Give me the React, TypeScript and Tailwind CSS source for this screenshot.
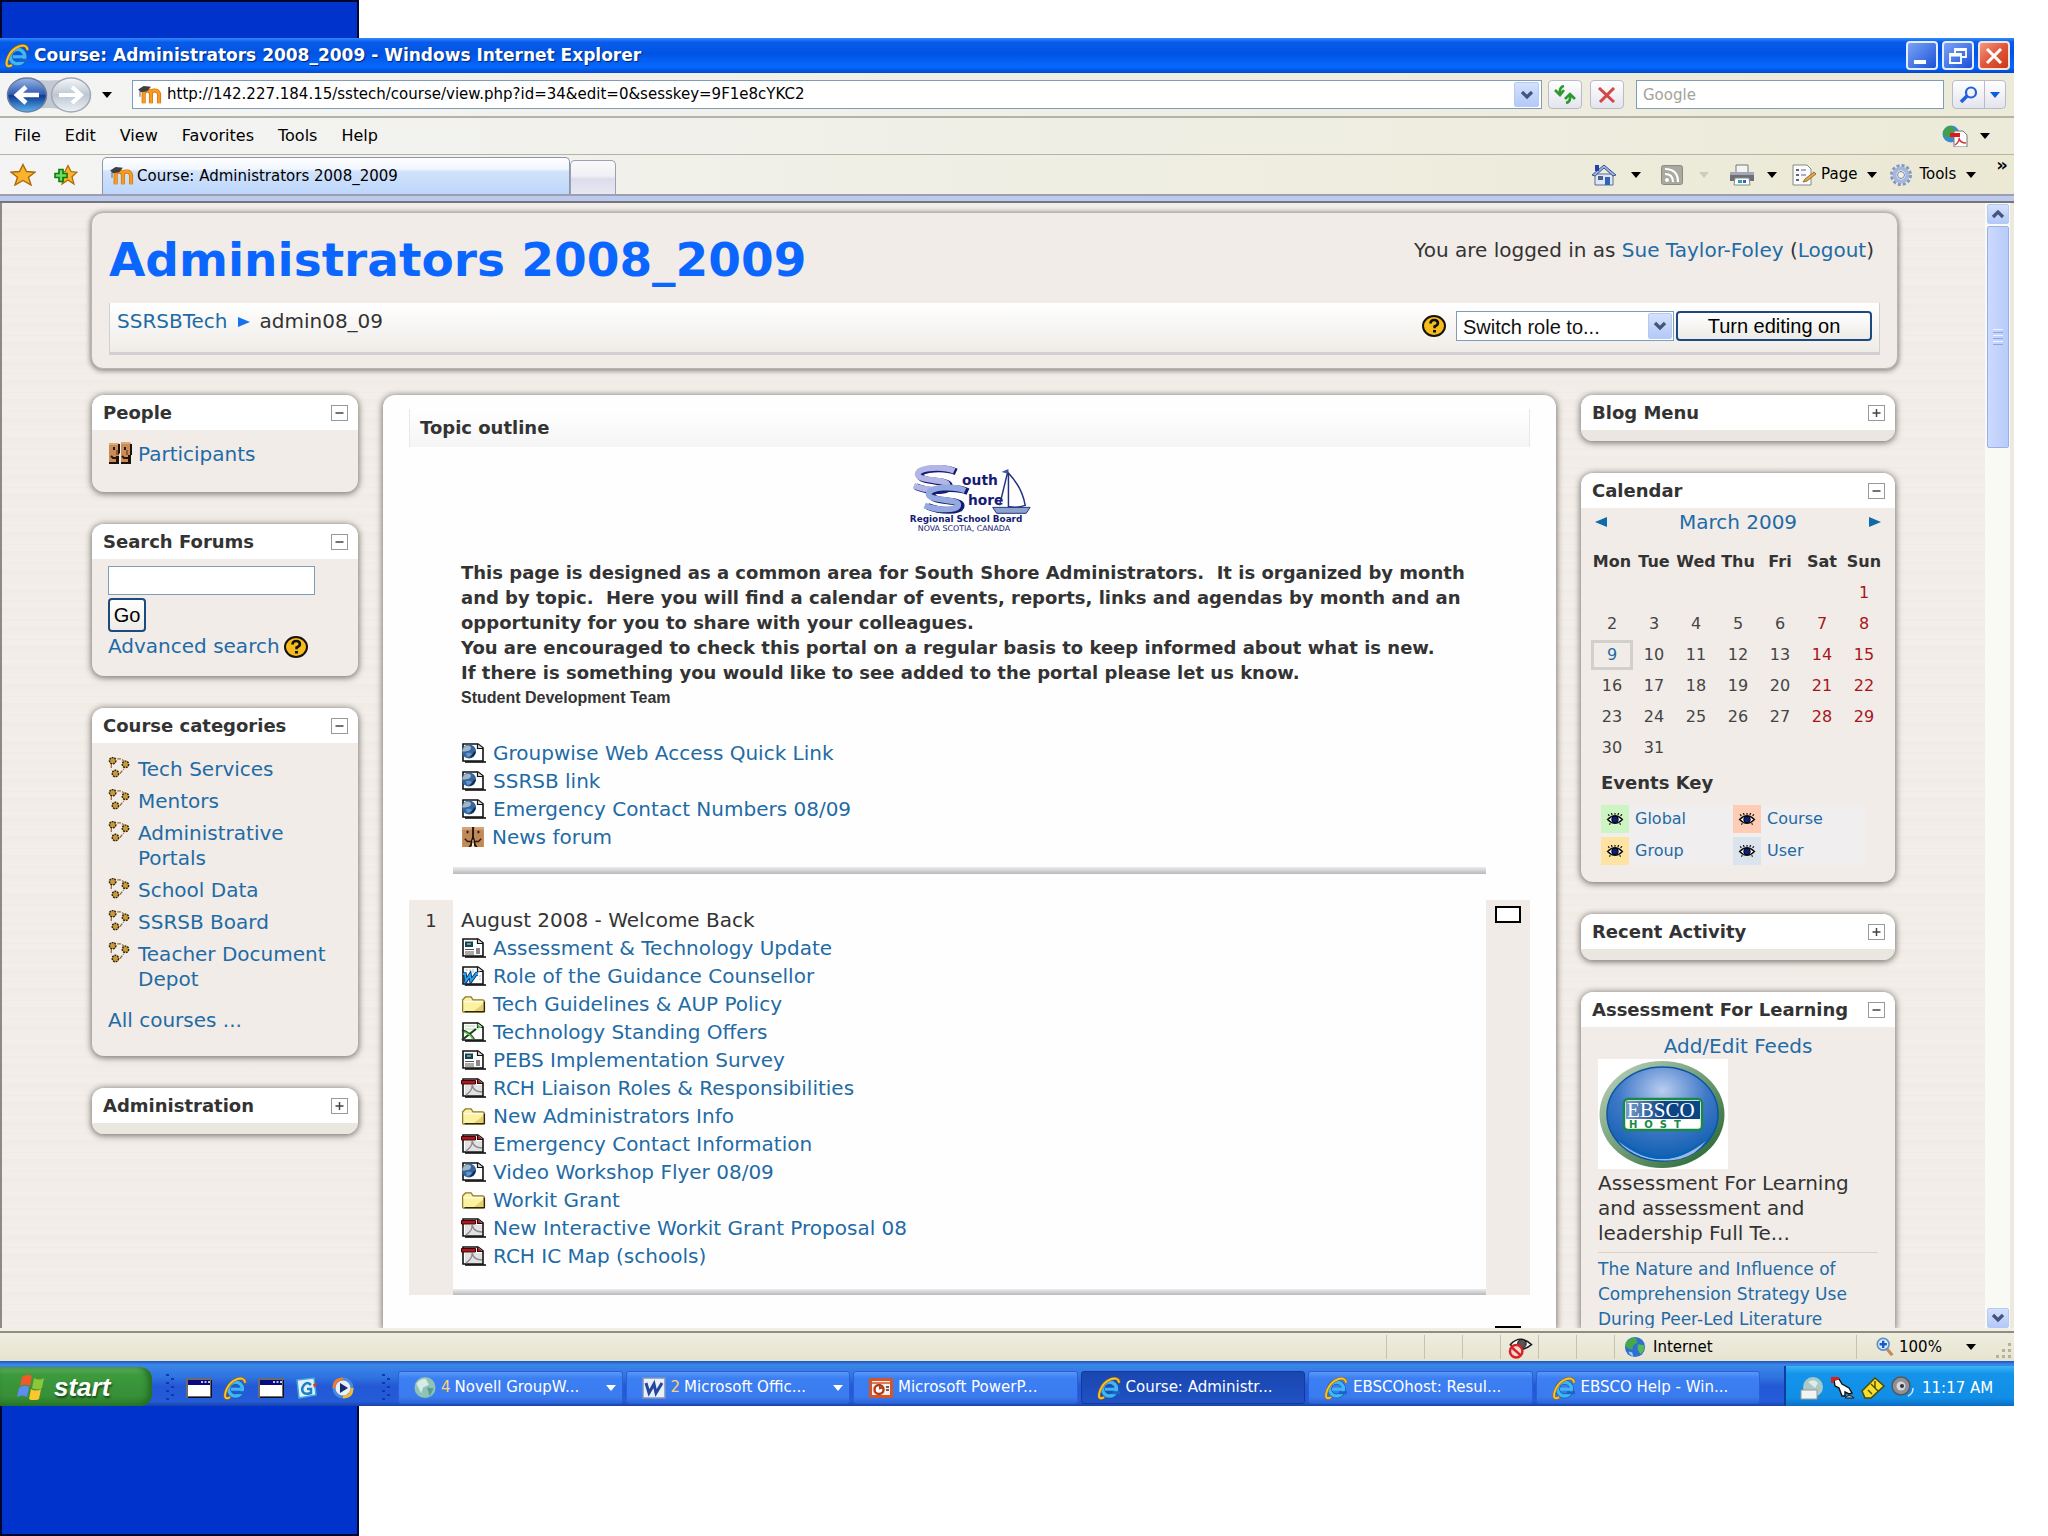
import React from "react";

const UI = "font-['DejaVu_Sans',sans-serif]";
const LINK = "text-[#1f6ba5]";

/* ---------- icons ---------- */

function IeLogo({ className }: { className: string }) {
  return (
    <svg viewBox="0 0 24 24" className={className} aria-hidden="true">
      <circle cx="12.5" cy="13" r="7" fill="none" stroke="#0d5fae" strokeWidth="5" />
      <circle cx="12.5" cy="13" r="7" fill="none" stroke="#43b5f2" strokeWidth="3.4" />
      <path d="M8 13.2h12.5" stroke="#43b5f2" strokeWidth="3" />
      <path d="M15 15.2h8v3h-8z" fill="#1d62c8" />
      <path d="M22 6C21-1 8 3 3.5 13.500C1 20 1.500 24 6.500 21.500" fill="none" stroke="#a86c00" strokeWidth="3" strokeLinecap="round" />
      <path d="M22 6C21-1 8 3 3.5 13.500C1 20 1.500 24 6.500 21.500" fill="none" stroke="#fbc52d" strokeWidth="1.800" strokeLinecap="round" />
    </svg>
  );
}

function MoodleIcon() {
  return (
    <svg viewBox="0 0 26 22" className="h-[20px] w-[26px] shrink-0" aria-hidden="true">
      <path d="M6 20V10q0-4 4-4t4 4v10M14 20V10q0-4 4-4t5 4v10" fill="none" stroke="#c66f04" strokeWidth="4.400" />
      <path d="M6 20V10q0-4 4-4t4 4v10M14 20V10q0-4 4-4t5 4v10" fill="none" stroke="#f99a1c" strokeWidth="3" />
      <path d="M0 5l6-4 8 1-4 5-7 1z" fill="#3f3f3f" />
      <path d="M2 6v7" stroke="#555" />
    </svg>
  );
}

function Caret({ className = "text-black" }: { className?: string }) {
  return (
    <svg viewBox="0 0 10 6" className={"h-[6px] w-[10px] shrink-0 " + className} aria-hidden="true">
      <path d="M0 0h10L5 6z" fill="currentColor" />
    </svg>
  );
}

function ChevronBox({ up = false, className }: { up?: boolean; className: string }) {
  return (
    <span className={"flex items-center justify-center rounded-[2px] border border-[#b6c8f4] bg-gradient-to-b from-[#d5e1fc] to-[#b4c9f8] " + className}>
      <svg viewBox="0 0 14 10" className="h-[10px] w-[14px]" aria-hidden="true">
        <path d={up ? "M2 8l5-5 5 5" : "M2 2l5 5 5-5"} fill="none" stroke="#42557f" strokeWidth="3.200" />
      </svg>
    </span>
  );
}

function HelpIcon() {
  return (
    <svg viewBox="0 0 24 22" className="h-[22px] w-[24px] shrink-0" aria-label="Help" role="img">
      <ellipse cx="12" cy="11" rx="11" ry="10" fill="#f6bb1c" stroke="#15120a" strokeWidth="2" />
      <path d="M8.500 8.500q0-3.500 3.700-3.500t3.700 3.200q0 2-3.300 3.300v1.800" fill="none" stroke="#111" strokeWidth="2.600" />
      <path d="M11 15h3v2.500h-3z" fill="#111" />
    </svg>
  );
}

function PeopleIcon() {
  return (
    <svg viewBox="0 0 24 22" className="h-[22px] w-[24px] shrink-0" aria-hidden="true">
      <path d="M1 1h9l1 1v20H1zM13 0h9l1 2v18H13z" fill="#c98c55" />
      <path d="M1 1h9v2H1zM13 0h9v2h-9z" fill="#dcaa78" />
      <path d="M10 2h2v9l-2 2zM22 2h2v11h-2zM8 14h3v8H1v-2h7zM20 13h3v9H13v-2h7z" fill="#1d1109" />
      <path d="M5 5h2v3H5zM16 5h2v3h-2z" fill="#2a170b" />
      <path d="M3 14l2 2h4M14 14l2 2h4" fill="none" stroke="#2a170b" strokeWidth="1.800" />
      <path d="M8 8h2v5H8zM18 8h2v5h-2z" fill="#8f5b31" />
    </svg>
  );
}

function ForumIcon() {
  return (
    <svg viewBox="0 0 24 22" className="h-[20px] w-[24px] shrink-0" aria-hidden="true">
      <path d="M0 0h24v22H0z" fill="#c08a58" />
      <path d="M0 0h11v3H0zM14 0h10v3H14z" fill="#d5a575" />
      <path d="M11 0h2v11l1 3h-4l1-3z" fill="#1c1009" />
      <path d="M10 14h1v6l-2 2H7l2-3zM14 14h-1v6l2 2h2l-2-3z" fill="#1c1009" />
      <path d="M5 4h2v3H5zM17 4h2v3h-2z" fill="#2a170b" />
      <path d="M3 13l3 3h4M21 13l-3 3h-4" fill="none" stroke="#2a170b" strokeWidth="1.500" />
      <path d="M11 18h2v4h-2z" fill="#f3ede6" />
    </svg>
  );
}

function CourseIcon() {
  const dots: [number, number][] = [[4, 4], [18, 8], [7, 18]];
  return (
    <svg viewBox="0 0 24 24" className="h-[22px] w-[24px] shrink-0" aria-hidden="true">
      <path d="M9 2h4l3 2M2.500 8v6M12 18l4-5" fill="none" stroke="#a8672c" strokeWidth="1.400" strokeDasharray="4 1.500" />
      {dots.map(([x, y]) => (
        <circle key={x} cx={x} cy={y} r="3.500" fill="#c79a3a" stroke="#2b2008" strokeWidth="1.600" strokeDasharray="2 1" />
      ))}
    </svg>
  );
}

function PageShape({ children }: { children: React.ReactNode }) {
  return (
    <svg viewBox="0 0 25 20" className="h-[20px] w-[25px] shrink-0" aria-hidden="true">
      <path d="M2 1h15l5 4v13H2z" fill="#fff" stroke="#111" strokeWidth="1.600" />
      <path d="M16.500 1v4.500H22" fill="#ddd" stroke="#111" strokeWidth="1.200" />
      <path d="M4 19h21" stroke="#111" strokeWidth="1.600" />
      {children}
    </svg>
  );
}

type Kind = "web" | "text" | "word" | "folder" | "excel" | "pdf" | "forum";

function ActivityIcon({ kind }: { kind: Kind }) {
  if (kind === "forum") return <ForumIcon />;
  if (kind === "folder")
    return (
      <svg viewBox="0 0 25 18" className="h-[17px] w-[25px] shrink-0" aria-hidden="true">
        <path d="M1 16V4l3-3h6l2 3h10q2 0 2 2v10q0 1-1 1H2q-1 0-1-1z" fill="#fbf3a2" stroke="#8b7a2e" strokeWidth="1.300" />
        <path d="M2 6h20" stroke="#fffce0" strokeWidth="1.500" />
        <path d="M13 16l10-8v8z" fill="#e7cf6e" />
        <path d="M24 6v10.500H3" fill="none" stroke="#2b260c" strokeWidth="1.500" />
      </svg>
    );
  if (kind === "web")
    return (
      <PageShape>
        <circle cx="8" cy="8.500" r="7" fill="#35659f" />
        <path d="M3 4q4-3 7 0 0 4-4 4-3 1-5 0z" fill="#9fb8c4" />
        <path d="M8 15q6-1 7-7-3 1-4 4z" fill="#15273f" />
        <path d="M5 10q4-1 6 1-2 3-5 3z" fill="#5e97d0" />
      </PageShape>
    );
  if (kind === "text")
    return (
      <PageShape>
        <path d="M4 3.500h8v5.500H4z" fill="#1c3f4a" />
        <path d="M6 5h4v2H6z" fill="#4aa0b0" />
        <path d="M4 11.500h9M4 14h9M4 16h9" stroke="#555" />
        <path d="M15 10h4v6h-4z" fill="#888" />
      </PageShape>
    );
  if (kind === "word")
    return (
      <PageShape>
        <path d="M5 4h9M8 6h11M19 9v6" stroke="#9cc4d8" strokeDasharray="2 1" />
        <path d="M2 8h2l1 7 4-6 1 6 5-7h2" fill="none" stroke="#0b2c6b" strokeWidth="3.600" />
        <path d="M2 8h2l1 7 4-6 1 6 5-7h2" fill="none" stroke="#22a8e8" strokeWidth="1.800" />
      </PageShape>
    );
  if (kind === "excel")
    return (
      <PageShape>
        <path d="M4 4h10M4 7h14" stroke="#a9dba0" />
        <path d="M16 2l5 4h-4z" fill="#47c03a" />
        <path d="M1 8q8 3 12 9M15 7L1 18" fill="none" stroke="#1f3e22" strokeWidth="2.200" />
        <path d="M3 10q6 2 9 7" fill="none" stroke="#63c94d" strokeWidth="1.800" />
      </PageShape>
    );
  return (
    <PageShape>
      <path d="M4 7h17v10H4z" fill="#e2e2e2" />
      <path d="M5 17q7-5 6-10 2 7 10 7" fill="none" stroke="#8c8c8c" strokeWidth="1.500" />
      <path d="M0.500 2.500h14V6H0.500z" fill="#b3161c" stroke="#3a0406" />
      <path d="M17 1.500l4 3.500h-4z" fill="#c4151b" />
    </PageShape>
  );
}

function EyeIcon() {
  return (
    <svg viewBox="0 0 18 14" className="h-[13px] w-[18px]" aria-hidden="true">
      <path d="M1 7q4-4 8-4t8 4q-4 4-8 4T1 7z" fill="#fff" stroke="#111" strokeWidth="1.500" />
      <circle cx="9" cy="7" r="3.500" fill="#0d1f7a" stroke="#000" />
      <path d="M3 3L1.500 1.500M6 2L5 0M9 2V0M12 2l1-2M15 3l1.500-1.500M4 11l-1 1.500M14 11l1 1.500" stroke="#111" strokeWidth="1.300" />
    </svg>
  );
}

function SouthShoreLogo() {
  const s = "M45 3C34-2 9-1 8 6c-1 8 30 5 30 11 0 7-22 6-34 1";
  return (
    <svg viewBox="0 0 124 70" className="h-[69px] w-[124px]" role="img" aria-label="South Shore Regional School Board">
      <path d={s} transform="translate(3 4)" fill="none" stroke="#141b74" strokeWidth="7" />
      <path d={s} transform="translate(1 3)" fill="none" stroke="#b3b5e6" strokeWidth="6" />
      <path d={s} transform="translate(15 24)" fill="none" stroke="#141b74" strokeWidth="7" />
      <path d={s} transform="translate(12 23)" fill="none" stroke="#93a9e0" strokeWidth="6" />
      <g fill="#141b74" fontFamily="DejaVu Sans, sans-serif" fontWeight="bold">
        <text x="54" y="20" fontSize="14">outh</text>
        <text x="60" y="41" fontSize="14">hore</text>
        <text x="1" y="58" fontSize="9">Regional School Board</text>
        <text x="9" y="67" fontSize="8" fontWeight="normal">NOVA SCOTIA, CANADA</text>
      </g>
      <path d="M100 8l-8 33M101 8q14 15 17 33-9 3-17 1zM101 8v34" fill="none" stroke="#25307f" strokeWidth="1.500" />
      <path d="M94 7l7-3v5z" fill="#3d52a0" />
      <path d="M85 43h38l-4 6H89z" fill="#8ba3cf" stroke="#25307f" />
    </svg>
  );
}

function EbscoLogo() {
  return (
    <svg viewBox="0 0 130 110" className="h-[110px] w-[130px] bg-white" role="img" aria-label="EBSCO Host">
      <defs>
        <linearGradient id="ring" x1="0" y1="0" x2="1" y2="1">
          <stop offset="0" stopColor="#c3d6c3" />
          <stop offset="0.500" stopColor="#6f9c74" />
          <stop offset="1" stopColor="#1d5f2a" />
        </linearGradient>
        <radialGradient id="ball" cx="0.500" cy="0.250" r="0.800">
          <stop offset="0" stopColor="#b9cdf0" />
          <stop offset="0.500" stopColor="#3f78c8" />
          <stop offset="1" stopColor="#0659ab" />
        </radialGradient>
        <linearGradient id="plate" x1="0" y1="0" x2="1" y2="0">
          <stop offset="0" stopColor="#7c9ccc" />
          <stop offset="0.500" stopColor="#0c4585" />
        </linearGradient>
      </defs>
      <ellipse cx="64" cy="55.500" rx="62.500" ry="53.500" fill="url(#ring)" />
      <ellipse cx="64.500" cy="55" rx="55.500" ry="47" fill="url(#ball)" stroke="#0a55a5" strokeWidth="1.500" />
      <path d="M20 82q44 36 88 0-10 14-26 18-20 4-38-2-16-6-24-16z" fill="#9db9e8" />
      <path d="M22 80q44 34 84 0-18 20-42 20T22 80z" fill="#0665b8" />
      <rect x="26" y="40" width="78" height="31" rx="4" fill="#fff" stroke="#188a45" strokeWidth="2.500" />
      <path d="M28 42h74v18H28z" fill="url(#plate)" />
      <text x="29" y="58" fontSize="21" fill="#fff" fontFamily="Liberation Serif, serif">EBSCO</text>
      <text x="31" y="69" fontSize="10" fontWeight="bold" fill="#188a45" fontFamily="DejaVu Sans, sans-serif" xmlSpace="preserve">H  O  S  T</text>
    </svg>
  );
}

function Globe({ className }: { className: string }) {
  return (
    <svg viewBox="0 0 24 24" className={className} aria-hidden="true">
      <circle cx="12" cy="12" r="11" fill="#2f6fd0" />
      <path d="M3 6q5-5 10-4l2 5-5 3-1 5-5-2-3-2z" fill="#46a848" />
      <path d="M15 9l7 1q1 6-4 10l-3-5z" fill="#57b957" />
      <path d="M5 17l4 1 1 4q-4-1-5-5z" fill="#9bd2f0" />
    </svg>
  );
}

/* ---------- browser chrome ---------- */

function TitleBar() {
  return (
    <header className="flex h-[35px] items-center gap-1 bg-[linear-gradient(180deg,#2f8bff_0%,#0a5bea_12%,#0054e3_45%,#0668ff_82%,#0049cf_100%)] pr-1 pl-1">
      <IeLogo className="h-[25px] w-[26px]" />
      <h1 className="flex-1 text-[17px] font-bold whitespace-nowrap text-white [text-shadow:1px_1px_1px_#05267a]">
        Course: Administrators 2008_2009 - Windows Internet Explorer
      </h1>
      <div className="flex gap-1">
        <button aria-label="Minimize" className="flex h-[29px] w-8 items-end rounded-[4px] border-2 border-[#e6edff] bg-gradient-to-br from-[#7ba2f5] to-[#1a4fd8] pb-1 pl-1.5">
          <span className="h-1 w-3 bg-white" />
        </button>
        <button aria-label="Restore" className="flex h-[29px] w-8 items-center justify-center rounded-[4px] border-2 border-[#e6edff] bg-gradient-to-br from-[#7ba2f5] to-[#1a4fd8]">
          <svg viewBox="0 0 18 16" className="h-4 w-[18px]" fill="none" stroke="#fff" strokeWidth="1.800">
            <path d="M6 5V1h11v8h-4M6 2h11M1 6h11v9H1zM1 7.500h11" />
          </svg>
        </button>
        <button aria-label="Close" className="flex h-[29px] w-8 items-center justify-center rounded-[4px] border-2 border-[#f3e2de] bg-gradient-to-br from-[#f09a80] via-[#e0553a] to-[#c93a14]">
          <svg viewBox="0 0 18 16" className="h-4 w-[18px]" stroke="#fff" strokeWidth="3">
            <path d="M2 1l14 14M16 1L2 15" />
          </svg>
        </button>
      </div>
    </header>
  );
}

function AddressRow() {
  return (
    <div className="flex h-[45px] items-center border-b-2 border-[#b5b3a6] bg-gradient-to-r from-[#f4f4f4] to-[#ecead8] pr-2 pl-1.5">
      <svg viewBox="0 0 88 36" className="h-9 w-[88px] shrink-0" aria-label="Back and forward" role="img">
        <defs>
          <linearGradient id="back" x1="0" y1="0" x2="0" y2="1">
            <stop offset="0" stopColor="#9ab5e4" />
            <stop offset="0.480" stopColor="#2d5cb4" />
            <stop offset="0.520" stopColor="#10388f" />
            <stop offset="1" stopColor="#58b5f2" />
          </linearGradient>
          <linearGradient id="fwd" x1="0" y1="0" x2="0" y2="1">
            <stop offset="0" stopColor="#f6f8fa" />
            <stop offset="0.500" stopColor="#bcc6d2" />
            <stop offset="1" stopColor="#eef2f6" />
          </linearGradient>
        </defs>
        <path d="M20 1q22 5 46 0v34q-24-8-46 0z" fill="#c3c9d2" />
        <ellipse cx="21" cy="18" rx="19.500" ry="17" fill="url(#back)" stroke="#6d7e9c" strokeWidth="1.500" />
        <ellipse cx="65" cy="18" rx="19.500" ry="17" fill="url(#fwd)" stroke="#a1a9b4" strokeWidth="1.500" />
        <path d="M33 18H12M20 10l-9 8 9 8" fill="none" stroke="#fff" strokeWidth="4.500" />
        <path d="M53 18h21M66 10l9 8-9 8" fill="none" stroke="#fff" strokeWidth="4" />
      </svg>
      <span className="mr-5 ml-2 flex"><Caret /></span>
      <div className="flex h-[29px] min-w-0 flex-1 items-center gap-1 border border-[#7f9db9] bg-white pr-0.5 pl-1">
        <MoodleIcon />
        <input
          aria-label="Address"
          defaultValue="http://142.227.184.15/sstech/course/view.php?id=34&edit=0&sesskey=9F1e8cYKC2"
          className="min-w-0 flex-1 bg-transparent text-[15px] text-black outline-none"
        />
        <ChevronBox className="h-[25px] w-[25px]" />
      </div>
      <button aria-label="Refresh" className="ml-1.5 flex h-[29px] w-[34px] items-center justify-center rounded-[4px] border border-[#b9bcc8] bg-gradient-to-b from-white to-[#e4e4ee]">
        <svg viewBox="0 0 24 20" className="h-5 w-6" fill="none" stroke="#2a9a2e" strokeWidth="2.600">
          <path d="M11 1q-5 1-4 8M2 5l5 5 4-5M13 18q5-1 4-8M12 14l5-5 5 5" />
        </svg>
      </button>
      <button aria-label="Stop" className="ml-2 flex h-[29px] w-[34px] items-center justify-center rounded-[4px] border border-[#b9bcc8] bg-gradient-to-b from-white to-[#e4e4ee]">
        <svg viewBox="0 0 20 16" className="h-4 w-5" stroke="#d24848" strokeWidth="3">
          <path d="M2 1l15 14M17 1L3 15" />
        </svg>
      </button>
      <input aria-label="Search" placeholder="Google" className="ml-3 h-[29px] w-[308px] border border-[#7f9db9] bg-white px-1.5 text-[15px] outline-none placeholder:text-[#a3a39b]" />
      <div className="ml-2 flex h-[29px] rounded-[4px] border border-[#b9bcc8] bg-gradient-to-b from-white to-[#e4e4ee]">
        <button aria-label="Go search" className="flex w-8 items-center justify-center border-r border-[#b9bcc8]">
          <svg viewBox="0 0 22 18" className="h-[18px] w-[22px]" fill="none" stroke="#1f5fe0">
            <circle cx="13" cy="6.500" r="5" strokeWidth="2.200" />
            <path d="M9 10l-6 6" strokeWidth="3.500" />
          </svg>
        </button>
        <button aria-label="Search options" className="flex w-5 items-center justify-center"><Caret className="text-[#0b5ce0]" /></button>
      </div>
    </div>
  );
}

function MenuRow() {
  return (
    <nav className="flex h-[37px] items-center border-b border-[#b5b3a6] bg-gradient-to-r from-[#f4f4f4] to-[#ecead8] pr-6 pl-3.5 text-[16px] text-black">
      <div className="flex flex-1 gap-6">
        {["File", "Edit", "View", "Favorites", "Tools", "Help"].map((m) => (
          <button key={m}>{m}</button>
        ))}
      </div>
      <button aria-label="Convert to PDF" className="flex items-center gap-3">
        <svg viewBox="0 0 26 22" className="h-[22px] w-[26px]" aria-hidden="true">
          <circle cx="9" cy="9" r="8.500" fill="#3d8bc9" />
          <path d="M1 7q4-7 9-6l3 5-5 3-1 4-5-2z" fill="#43a047" />
          <path d="M12 6h9l4 4v12H12z" fill="#fff" stroke="#777" />
          <path d="M8 8h10v4H8z" fill="#e01818" />
          <path d="M13 20q5-4 4-7 1 5 7 5" fill="none" stroke="#cc3a3a" strokeWidth="1.400" />
        </svg>
        <Caret />
      </button>
    </nav>
  );
}

function Star({ plus = false }: { plus?: boolean }) {
  return (
    <svg viewBox="0 0 26 22" className="h-[23px] w-[26px]" aria-hidden="true">
      {plus ? (
        <path d="M16 2l3 6 6 .7-5 4.500 2 7.300-6-4-6 4 2-7.300-5-4.500 6-.7z" fill="#fcb32c" stroke="#a8690a" strokeWidth="1.200" />
      ) : (
        <path d="M13 1l3.500 7 8.500.7-6.500 5 2.500 7.800-8-4.500-8 4.500 2.500-7.800-6.500-5L9.500 8z" fill="#fcb32c" stroke="#a8690a" strokeWidth="1.400" />
      )}
      {plus && <path d="M7 6h4v4h4v4h-4v4H7v-4H3v-4h4z" fill="#6fdc60" stroke="#0e7a14" strokeWidth="1.600" />}
    </svg>
  );
}

function TabRow() {
  return (
    <div className="flex h-[41px] items-end border-b-2 border-[#9d9fae] bg-gradient-to-r from-[#f4f4f4] to-[#ebe9d4]">
      <div className="flex h-full items-center gap-4 pr-6 pl-2.5">
        <button aria-label="Favorites Center"><Star /></button>
        <button aria-label="Add to Favorites"><Star plus /></button>
      </div>
      <button className="flex h-[37px] w-[468px] items-center gap-0.5 rounded-t-[5px] border border-b-0 border-[#8e95a8] bg-[linear-gradient(180deg,#fdfeff_0%,#f2f7fe_30%,#d2e3fb_38%,#bcd6fb_100%)] pl-1.5 text-[15px] text-black">
        <MoodleIcon />
        Course: Administrators 2008_2009
      </button>
      <button aria-label="New Tab" className="h-[34px] w-[46px] rounded-t-[5px] border border-b-0 border-[#9da0ae] bg-[linear-gradient(180deg,#fafafa_0%,#f0f0f5_45%,#dcdcec_55%,#e8e8f4_100%)]" />
      <div className="flex h-full flex-1 items-center justify-end text-[15px] text-black">
        <button aria-label="Home" className="mr-5 flex items-center gap-3.5">
          <svg viewBox="0 0 26 22" className="h-[22px] w-[26px]" aria-hidden="true">
            <path d="M4 10h18v11H4z" fill="#dfe6f5" stroke="#5b6c94" />
            <path d="M1 11L13 1l12 10-3 1-9-8-9 8z" fill="#9db4e2" stroke="#3d558f" />
            <path d="M4 1h4v6H4z" fill="#233fb0" />
            <path d="M14 13h5v8h-5z" fill="#2f62b8" />
            <path d="M7 12h5v4H7z" fill="#4d5f86" />
          </svg>
          <Caret />
        </button>
        <button aria-label="Feeds" className="mr-5 flex items-center gap-4">
          <svg viewBox="0 0 22 20" className="h-5 w-[22px]" aria-hidden="true">
            <rect x="0.500" y="0.500" width="21" height="19" rx="2" fill="#a9a99f" stroke="#8b8b82" />
            <circle cx="6" cy="15" r="2" fill="#fff" />
            <path d="M4 9q8 0 8 8M4 4q13 0 13 13" fill="none" stroke="#fff" strokeWidth="2.200" />
          </svg>
          <Caret className="text-[#cfccbd]" />
        </button>
        <button aria-label="Print" className="mr-3.5 flex items-center gap-3">
          <svg viewBox="0 0 26 22" className="h-[22px] w-[26px]" aria-hidden="true">
            <path d="M7 1h12v8H7z" fill="#f4f4f4" stroke="#777" />
            <path d="M1 8h24v9H1z" fill="#6c6f78" />
            <path d="M1 8h24v3H1z" fill="#a4a8b2" />
            <path d="M6 14h14l1 7H5z" fill="#fff" stroke="#888" />
            <path d="M9 16h4v3H9z" fill="#2aa5a0" />
            <path d="M14 16h3v3h-3z" fill="#3565c4" />
          </svg>
          <Caret />
        </button>
        <button className="mr-3 flex items-center gap-1">
          <svg viewBox="0 0 26 22" className="h-[22px] w-[26px]" aria-hidden="true">
            <path d="M2 1h14l4 4v16H2z" fill="#fbfbfb" stroke="#888" />
            <path d="M5 6h3M5 11h3M5 16h3" stroke="#667" strokeWidth="2" />
            <path d="M10 6h5M10 11h5" stroke="#8a98bd" strokeWidth="1.500" />
            <path d="M12 18l2-3 9-7 2 2-9 7z" fill="#f0a63a" stroke="#6e5a2d" strokeWidth="0.800" />
          </svg>
          Page
          <span className="ml-1.5 flex"><Caret /></span>
        </button>
        <button className="mr-5 flex items-center gap-1.5">
          <svg viewBox="0 0 24 22" className="h-[22px] w-6" aria-hidden="true">
            <circle cx="12" cy="11" r="9.500" fill="none" stroke="#8496bb" strokeWidth="3" strokeDasharray="3 2" />
            <circle cx="12" cy="11" r="6.500" fill="#fff" stroke="#a3b8dc" strokeWidth="4" />
            <circle cx="12" cy="11" r="3.500" fill="#f4efe0" stroke="#7486ad" />
          </svg>
          Tools
          <span className="ml-1 flex"><Caret /></span>
        </button>
        <span className="mr-1.5 self-start text-[18px] leading-5 font-bold">»</span>
      </div>
    </div>
  );
}

/* ---------- course page ---------- */

const CARD = "overflow-hidden bg-[#f1ece8] shadow-[0_1px_6px_1px_#7d7872]";

function Toggle({ open }: { open: boolean }) {
  return (
    <button aria-label={open ? "Hide block" : "Show block"} className="flex h-4 w-[17px] shrink-0 items-center justify-center border border-[#999] bg-white">
      <svg viewBox="0 0 9 8" className="h-2 w-[9px]" stroke="#444" strokeWidth="1.500">
        <path d={open ? "M0.500 4h8" : "M0.500 4h8M4.500 0v8"} />
      </svg>
    </button>
  );
}

function Block({ title, open = true, grow = false, children }: { title: string; open?: boolean; grow?: boolean; children?: React.ReactNode }) {
  return (
    <section className={CARD + (grow ? " flex-1 rounded-t-[12px]" : " shrink-0 rounded-[12px]")}>
      <div className="flex h-[35px] items-center justify-between bg-white pr-2.5 pl-[11px]">
        <h2 className="text-[18px] font-bold whitespace-nowrap text-[#333]">{title}</h2>
        <Toggle open={open} />
      </div>
      {open ? children : <div className="h-[11px] bg-[#eae7e1]" />}
    </section>
  );
}

function PageHeader() {
  return (
    <header className="rounded-[12px] border border-[#b9b4ae] bg-[#f1ece7] px-[17px] pb-[13px] shadow-[0_1px_5px_1px_#8d8882]">
      <div className="flex h-[90px] items-start justify-between pt-[15px]">
        <h2 className="text-[47px] leading-[64px] font-bold whitespace-nowrap text-[#0a66ff]">Administrators 2008_2009</h2>
        <p className="pt-2 pr-1.5 text-[20px] leading-[28px] text-[#333]">
          You are logged in as <a href="#user" className={LINK}>Sue Taylor-Foley</a> (<a href="#logout" className={LINK}>Logout</a>)
        </p>
      </div>
      <div className="flex h-[52px] items-start justify-between border border-t-0 border-b-[3px] border-[#d2ced2] bg-gradient-to-b from-white to-[#efece8] pr-[7px] pl-[7px]">
        <p className="flex items-center gap-2.5 pt-1.5 text-[20px] leading-[25px] text-[#333]">
          <a href="#home" className={LINK}>SSRSBTech</a>
          <svg viewBox="0 0 12 10" className="h-[10px] w-3" aria-hidden="true"><path d="M0 0l12 5-12 5z" fill="#1673f0" /></svg>
          admin08_09
        </p>
        <form className="flex items-center gap-0.5 pt-2 font-['Liberation_Sans',Arial,sans-serif] text-[20px]">
          <span className="mr-2 flex"><HelpIcon /></span>
          <div className="relative h-[30px] w-[218px]">
            <select aria-label="Switch role" className="h-full w-full appearance-none border border-[#7f9db9] bg-white pl-1.5 text-[#111] outline-none">
              <option>Switch role to...</option>
            </select>
            <ChevronBox className="pointer-events-none absolute top-0.5 right-0.5 h-[26px] w-6" />
          </div>
          <button type="button" className="h-[30px] w-[196px] rounded-[4px] border-2 border-[#1c4a80] bg-gradient-to-b from-white to-[#ecebe5] leading-[24px] text-black">
            Turn editing on
          </button>
        </form>
      </div>
    </header>
  );
}

const CATEGORIES = ["Tech Services", "Mentors", "Administrative Portals", "School Data", "SSRSB Board", "Teacher Document Depot"];

function LeftColumn() {
  return (
    <aside className="flex w-[266px] shrink-0 flex-col gap-8 text-[20px] leading-[25px]">
      <Block title="People">
        <div className="flex items-start gap-1.5 px-4 pt-3 pb-[25px]">
          <PeopleIcon />
          <a href="#participants" className={LINK}>Participants</a>
        </div>
      </Block>
      <Block title="Search Forums">
        <form className="px-4 pt-[7px] pb-[17px]">
          <input aria-label="Search forums" className="block h-[29px] w-[207px] border border-[#7f9db9] bg-white px-1 outline-none" />
          <button type="button" className="mt-[3px] block h-[34px] w-[38px] rounded-[4px] border-2 border-[#1c4a80] bg-gradient-to-b from-white to-[#ecebe5] font-['Liberation_Sans',Arial,sans-serif] text-[20px] text-black">
            Go
          </button>
          <div className="mt-0.5 flex items-center gap-1">
            <a href="#advanced" className={LINK}>Advanced search</a>
            <HelpIcon />
          </div>
        </form>
      </Block>
      <Block title="Course categories">
        <div className="px-4 pt-3.5 pb-[23px]">
          <ul className="flex flex-col gap-[7px]">
            {CATEGORIES.map((c) => (
              <li key={c} className="flex items-start gap-1.5">
                <CourseIcon />
                <a href="#category" className={LINK}>{c}</a>
              </li>
            ))}
          </ul>
          <p className="pt-4"><a href="#all" className={LINK}>All courses ...</a></p>
        </div>
      </Block>
      <Block title="Administration" open={false} />
    </aside>
  );
}

type Activity = [Kind, string];

const INTRO: Activity[] = [
  ["web", "Groupwise Web Access Quick Link"],
  ["web", "SSRSB link"],
  ["web", "Emergency Contact Numbers 08/09"],
  ["forum", "News forum"],
];

const AUGUST: Activity[] = [
  ["text", "Assessment & Technology Update"],
  ["word", "Role of the Guidance Counsellor"],
  ["folder", "Tech Guidelines & AUP Policy"],
  ["excel", "Technology Standing Offers"],
  ["text", "PEBS Implementation Survey"],
  ["pdf", "RCH Liaison Roles & Responsibilities"],
  ["folder", "New Administrators Info"],
  ["pdf", "Emergency Contact Information"],
  ["web", "Video Workshop Flyer 08/09"],
  ["folder", "Workit Grant"],
  ["pdf", "New Interactive Workit Grant Proposal 08"],
  ["pdf", "RCH IC Map (schools)"],
];

function Activities({ items }: { items: Activity[] }) {
  return (
    <ul>
      {items.map(([kind, name]) => (
        <li key={name} className="flex h-7 items-center gap-[7px]">
          <ActivityIcon kind={kind} />
          <a href="#activity" className={"whitespace-nowrap " + LINK}>{name}</a>
        </li>
      ))}
    </ul>
  );
}

function TopicBox() {
  return <button aria-label="Show only this topic" className="block h-[17px] w-[26px] border-2 border-black bg-white" />;
}

function CenterColumn() {
  return (
    <main className="min-w-0 flex-1 overflow-hidden rounded-t-[12px] bg-[#fefefe] px-[26px] pt-3.5 text-[20px] text-[#333] shadow-[0_1px_6px_1px_#7d7872]">
      <h2 className="h-[38px] border-x border-[#e8e8e8] bg-gradient-to-b from-white to-[#f5f5f5] pl-2.5 text-[18px] leading-[37px] font-bold">Topic outline</h2>
      <div className="mx-11 px-2 pt-[18px] pb-4">
        <div className="flex justify-center"><SouthShoreLogo /></div>
        <div className="pt-[26px] text-[18px] leading-[25px] font-bold">
          <p>This page is designed as a common area for South Shore Administrators.&nbsp; It is organized by month and by topic.&nbsp; Here you will find a calendar of events, reports, links and agendas by month and an opportunity for you to share with your colleagues.</p>
          <p>You are encouraged to check this portal on a regular basis to keep informed about what is new.</p>
          <p>If there is something you would like to see added to the portal please let us know.</p>
          <p className="font-['Liberation_Sans',Arial,sans-serif] text-[16px]">Student Development Team</p>
        </div>
        <div className="pt-[29px]"><Activities items={INTRO} /></div>
      </div>
      <div className="mx-11 h-[7px] bg-gradient-to-b from-[#ededef] to-[#b9b9bd]" />
      <section className="mt-[26px] flex">
        <div className="w-11 shrink-0 bg-[#f0ebe7] pt-2 text-center text-[18px] leading-[25px]">1</div>
        <div className="flex-1">
          <div className="px-2 pt-1.5 pb-[19px]">
            <h3 className="h-7 leading-[28px]">August 2008 - Welcome Back</h3>
            <Activities items={AUGUST} />
          </div>
          <div className="h-[6px] bg-gradient-to-b from-[#ededef] to-[#b9b9bd]" />
        </div>
        <div className="flex w-11 shrink-0 justify-center bg-[#f0ebe7] pt-1.5"><TopicBox /></div>
      </section>
      <div className="flex justify-end pt-[31px] pr-[9px]"><TopicBox /></div>
    </main>
  );
}

const DAYS = ["Mon", "Tue", "Wed", "Thu", "Fri", "Sat", "Sun"];
const WEEKS = Array.from({ length: 6 }, (_, w) => DAYS.map((_, d) => w * 7 + d - 5));

function Calendar() {
  const keys: [string, string][] = [
    ["Global", "bg-[#cdf5c4]"],
    ["Course", "bg-[#ffcdb5]"],
    ["Group", "bg-[#ffe3a3]"],
    ["User", "bg-[#dbe4ec]"],
  ];
  return (
    <div className="px-2.5 pb-[17px]">
      <div className={"flex h-[27px] items-center justify-between px-1 text-[20px] " + LINK}>
        <a href="#prev" aria-label="Previous month"><svg viewBox="0 0 12 10" className="h-[10px] w-3"><path d="M12 0L0 5l12 5z" fill="#0e6aa8" /></svg></a>
        <a href="#month">March 2009</a>
        <a href="#next" aria-label="Next month"><svg viewBox="0 0 12 10" className="h-[10px] w-3"><path d="M0 0l12 5-12 5z" fill="#0e6aa8" /></svg></a>
      </div>
      <table className="mt-3 w-full table-fixed border-collapse text-center text-[16px] leading-[20px] text-[#444]">
        <thead>
          <tr className="h-[30px] text-[#333]">
            {DAYS.map((d) => <th key={d} className="p-0">{d}</th>)}
          </tr>
        </thead>
        <tbody>
          {WEEKS.map((week) => (
            <tr key={week[0]} className="h-[31px]">
              {week.map((n, i) => (
                <td key={n} className={"p-0 " + (i > 4 ? "text-[#a8141c]" : "")}>
                  {n === 9 ? <a href="#today" className={"block border-[3px] border-[#d3cfcc] leading-[24px] " + LINK}>9</a> : n > 0 && n < 32 ? n : ""}
                </td>
              ))}
            </tr>
          ))}
        </tbody>
      </table>
      <h3 className="mt-1.5 mb-2 pl-2.5 text-[18px] leading-[28px] font-bold text-[#333]">Events Key</h3>
      <ul className="mr-5 ml-2.5 grid grid-cols-2 gap-y-1 bg-[#f0eeef]">
        {keys.map(([name, color]) => (
          <li key={name} className="flex h-7 items-center gap-1.5">
            <span className={"flex h-7 w-7 items-center justify-center " + color}><EyeIcon /></span>
            <a href="#key" className={"text-[16px] " + LINK}>{name}</a>
          </li>
        ))}
      </ul>
    </div>
  );
}

function RightColumn() {
  return (
    <aside className="flex w-[314px] shrink-0 flex-col gap-8">
      <Block title="Blog Menu" open={false} />
      <Block title="Calendar"><Calendar /></Block>
      <Block title="Recent Activity" open={false} />
      <Block title="Assessment For Learning" grow>
        <div className="px-[17px] pt-[7px] text-[20px] leading-[25px] text-[#333]">
          <p className="text-center"><a href="#feeds" className={LINK}>Add/Edit Feeds</a></p>
          <EbscoLogo />
          <p className="mt-0.5 border-b border-[#d8d2ce] pb-1.5">Assessment For Learning and assessment and leadership Full Te...</p>
          <p className="pt-1 text-[17px]"><a href="#article" className={LINK}>The Nature and Influence of Comprehension Strategy Use During Peer-Led Literature</a></p>
        </div>
      </Block>
    </aside>
  );
}

function Scrollbar() {
  return (
    <div className="flex w-[29px] shrink-0 flex-col items-center justify-between border-r-[4px] border-[#eceade] bg-[#fafaf5]" aria-hidden="true">
      <div className="flex w-full flex-col items-center">
        <ChevronBox up className="mt-px h-[20px] w-[22px]" />
        <div className="mt-0.5 flex h-[222px] w-[22px] flex-col items-center justify-center gap-0.5 rounded-[2px] border border-[#98b0ee] bg-gradient-to-r from-[#cbd9fd] to-[#b9cbf9]">
          <span className="h-px w-2.5 bg-[#eef3ff]" />
          <span className="h-px w-2.5 bg-[#8ea5dd]" />
          <span className="h-px w-2.5 bg-[#eef3ff]" />
          <span className="h-px w-2.5 bg-[#8ea5dd]" />
          <span className="h-px w-2.5 bg-[#eef3ff]" />
          <span className="h-px w-2.5 bg-[#8ea5dd]" />
        </div>
      </div>
      <ChevronBox className="h-[20px] w-[22px]" />
    </div>
  );
}

function StatusBar() {
  return (
    <footer className="shrink-0 bg-[#f1efe6] pt-[3px]">
      <div className="flex h-[30px] items-center justify-end border-t-2 border-[#8f8c83] bg-gradient-to-b from-[#efedde] to-[#e6e3d0] text-[15px] text-black">
        {[0, 1, 2].map((n) => <span key={n} className="h-6 w-[38px] border-l border-[#c6c3b1]" />)}
        <span className="flex h-6 w-[38px] items-center justify-center border-l border-[#c6c3b1]">
          <svg viewBox="0 0 26 24" className="h-[23px] w-[26px]" aria-label="Privacy report" role="img">
            <path d="M3 9q10-11 22 0-11 9-20 2z" fill="#fff" stroke="#222" strokeWidth="1.600" />
            <circle cx="15" cy="8" r="4.500" fill="#555" stroke="#111" />
            <circle cx="9" cy="16" r="6.500" fill="#f7d6d6" stroke="#d62424" strokeWidth="2.600" />
            <path d="M4.500 12l9 8" stroke="#d62424" strokeWidth="2.600" />
          </svg>
        </span>
        {[0, 1].map((n) => <span key={n} className="h-6 w-[38px] border-l border-[#c6c3b1]" />)}
        <span className="flex h-6 w-[242px] items-center gap-1.5 border-l border-[#c6c3b1] pl-2">
          <Globe className="h-[22px] w-6" />
          Internet
        </span>
        <span className="flex h-6 w-[158px] items-center border-l border-[#c6c3b1] pl-[18px]">
          <svg viewBox="0 0 20 22" className="mr-1 h-5 w-5" aria-hidden="true">
            <path d="M12 13l6 7" stroke="#c78b53" strokeWidth="3.500" />
            <circle cx="8" cy="8" r="6.500" fill="#dbeaff" stroke="#5f8ecb" strokeWidth="1.800" />
            <path d="M8 4v8M4 8h8" stroke="#1658c7" strokeWidth="2.600" />
          </svg>
          <span className="flex-1">100%</span>
          <span className="mr-5 flex"><Caret /></span>
          <svg viewBox="0 0 16 16" className="mr-0.5 h-4 w-4 self-end" fill="#b5b19c" aria-hidden="true">
            <path d="M12 0h3v3h-3zM12 6h3v3h-3zM6 6h3v3H6zM12 12h3v3h-3zM6 12h3v3H6zM0 12h3v3H0z" />
          </svg>
        </span>
      </div>
    </footer>
  );
}

/* ---------- taskbar ---------- */

function WindowIcon() {
  return (
    <svg viewBox="0 0 26 20" className="h-5 w-[26px]" aria-hidden="true">
      <path d="M1 1h24v18H1z" fill="#fff" stroke="#6b6b6b" strokeWidth="2" />
      <path d="M2 2h22v5H2z" fill="#0a0a80" />
      <path d="M15 4h2M18.500 4h2M22 4h2" stroke="#fff" strokeWidth="1.500" />
      <path d="M25.500 2v17.500H2" fill="none" stroke="#111" />
    </svg>
  );
}

function Grip() {
  return (
    <svg viewBox="0 0 8 30" className="h-[30px] w-2 shrink-0" fill="#123aa6" aria-hidden="true">
      <path d="M0 1h3v2H0zM5 5h3v2H5zM0 9h3v2H0zM5 13h3v2H5zM0 17h3v2H0zM5 21h3v2H5zM0 25h3v2H0z" />
    </svg>
  );
}

function WordIcon() {
  return (
    <svg viewBox="0 0 26 22" className="h-[22px] w-[26px] shrink-0" aria-hidden="true">
      <path d="M2 1h22v20H2z" fill="#e9effb" stroke="#7f93bd" strokeWidth="1.500" />
      <path d="M5 6l3 10 5-9 2 9 6-10" fill="none" stroke="#24479b" strokeWidth="3" />
    </svg>
  );
}

function PowerPointIcon() {
  return (
    <svg viewBox="0 0 26 22" className="h-[22px] w-[26px] shrink-0" aria-hidden="true">
      <path d="M1 1h24v20H1z" fill="#d2552c" />
      <path d="M4 4h18v14H4z" fill="#fbeee6" />
      <path d="M4 6h18" stroke="#d2552c" strokeWidth="1.500" />
      <circle cx="11" cy="12.500" r="4.500" fill="#fff" stroke="#b23c17" strokeWidth="2.400" />
      <path d="M11 12.500V8l4 3.500z" fill="#b23c17" />
      <path d="M18 10h3M18 13h3" stroke="#333" strokeWidth="1.600" />
    </svg>
  );
}

function TaskButton({ icon, count, label, active = false, menu = false }: { icon: React.ReactNode; count?: number; label: string; active?: boolean; menu?: boolean }) {
  return (
    <button
      className={
        "flex h-[33px] min-w-0 flex-1 items-center gap-1 rounded-[3px] border pr-1.5 pl-3.5 " +
        (active
          ? "border-[#15389a] bg-gradient-to-b from-[#1a46b0] to-[#1f52c4]"
          : "border-[#2a5fd8] bg-[linear-gradient(180deg,#5c98fb_0%,#3c7ff2_20%,#3a7cf0_80%,#2d66d8_100%)]")
      }
    >
      {icon}
      {count && <span className="text-[#ffd27a]">{count}</span>}
      <span className="flex-1 truncate text-left">{label}</span>
      {menu && <Caret className="text-white" />}
    </button>
  );
}

function Taskbar() {
  return (
    <div className="flex h-[45px] shrink-0 items-stretch bg-[linear-gradient(180deg,#1f55b8_0%,#3a86e8_8%,#2f74e0_35%,#2459d6_55%,#245bd8_90%,#1a43a8_100%)] text-[15px] text-white">
      <button className="mt-1.5 flex w-[152px] items-center gap-2 rounded-r-[12px] bg-[linear-gradient(180deg,#6cb868_0%,#3c9a3c_20%,#378f37_75%,#2a7a2a_100%)] pl-4 shadow-[inset_-4px_0_6px_#226b22]">
        <svg viewBox="0 0 30 26" className="h-[26px] w-[30px]" aria-hidden="true">
          <path d="M6 3q5-4 10-1l-2 10q-5-3-10 0z" fill="#f0592a" />
          <path d="M18 4q5 3 10 0l-2 10q-5 3-10 0z" fill="#8cc63a" />
          <path d="M3 14q5-4 10-1l-2 10q-5-3-10 0z" fill="#5d8df0" />
          <path d="M15 15q5 3 10 0l-2 10q-5 3-10 0z" fill="#fcc62e" />
        </svg>
        <span className="font-['Liberation_Sans',Arial,sans-serif] text-[26px] leading-[30px] font-bold italic [text-shadow:1px_2px_2px_#1a4a1a]">start</span>
      </button>
      <div className="flex items-center gap-2.5 pt-2 pl-3.5">
        <Grip />
        <div className="flex items-center gap-2.5 pr-4 pl-0.5">
          <WindowIcon />
          <IeLogo className="h-6 w-[26px]" />
          <WindowIcon />
          <svg viewBox="0 0 26 22" className="h-[22px] w-[26px]" aria-hidden="true">
            <path d="M3 3l17-2 2 17-17 3z" fill="#dff2fb" stroke="#3fa6dc" strokeWidth="1.500" />
            <path d="M17 8q-4-4-7 0t-1 7 8 1v-4h-4" fill="none" stroke="#1d7fc4" strokeWidth="2.500" />
            <path d="M19 7l5-1-4 5z" fill="#d8401f" />
          </svg>
          <svg viewBox="0 0 26 22" className="h-[22px] w-[26px]" aria-hidden="true">
            <circle cx="13" cy="11" r="9" fill="#e8effa" stroke="#4c8ad6" strokeWidth="3" />
            <path d="M4 11q0-9 9-9" fill="none" stroke="#f07c28" strokeWidth="3" />
            <path d="M22 11q0 9-9 9" fill="none" stroke="#f2b92c" strokeWidth="3" />
            <path d="M10 6l8 5-8 5z" fill="#142c6e" />
          </svg>
        </div>
        <Grip />
      </div>
      <div className="flex min-w-0 flex-1 items-center gap-[3px] pt-2 pr-6 pl-2">
        <TaskButton icon={<svg viewBox="0 0 24 24" className="h-[23px] w-6 shrink-0" aria-hidden="true"><circle cx="12" cy="12" r="11" fill="#8fc3b6" /><path d="M3 8q5-6 10-5l3 6-6 3-2 6z" fill="#d4ece4" /><path d="M14 12l7 1-4 8z" fill="#5a9c8e" /></svg>} count={4} label="Novell GroupW..." menu />
        <TaskButton icon={<WordIcon />} count={2} label="Microsoft Offic..." menu />
        <TaskButton icon={<PowerPointIcon />} label="Microsoft PowerP..." />
        <TaskButton icon={<IeLogo className="h-6 w-[26px] shrink-0" />} label="Course: Administr..." active />
        <TaskButton icon={<IeLogo className="h-6 w-[26px] shrink-0" />} label="EBSCOhost: Resul..." />
        <TaskButton icon={<IeLogo className="h-6 w-[26px] shrink-0" />} label="EBSCO Help - Win..." />
      </div>
      <div className="mt-[5px] flex w-[230px] items-center gap-1 border-l-2 border-[#0b3f9a] bg-[linear-gradient(180deg,#3cb4f5_0%,#1394ea_20%,#118ee6_80%,#0c6cc4_100%)] pt-1 pl-3.5">
        <svg viewBox="0 0 26 24" className="h-6 w-[26px]" aria-hidden="true">
          <circle cx="13" cy="11" r="10" fill="#a9c9c4" /><path d="M1 14h16v9H1z" fill="#f2f4f4" stroke="#999" /><path d="M8 6q6-4 10 1l-3 5z" fill="#dcecea" />
        </svg>
        <svg viewBox="0 0 26 24" className="h-6 w-[26px]" aria-hidden="true">
          <path d="M4 4l5-1 3 5 7 4 3 5-3 1-4-2v4h-3l-3-8-4-2z" fill="#fff" stroke="#111" strokeWidth="1.400" /><path d="M1 1h8v3H4v3H1z" fill="#d82020" /><path d="M15 22q4-5 9 0z" fill="#ccc" stroke="#111" />
        </svg>
        <svg viewBox="0 0 26 24" className="h-6 w-[26px]" aria-hidden="true">
          <path d="M2 15L15 2l9 8-13 12H5z" fill="#f7e02a" stroke="#4d4607" strokeWidth="1.500" /><path d="M11 8l7 7M8 14l4 4M15 5v7" stroke="#4d4607" strokeWidth="1.400" />
        </svg>
        <svg viewBox="0 0 26 24" className="h-6 w-[26px]" aria-hidden="true">
          <circle cx="11" cy="10" r="9" fill="#8e9096" stroke="#55575e" strokeWidth="1.500" /><circle cx="11" cy="10" r="4.500" fill="#d5d7dc" /><circle cx="12" cy="10" r="2" fill="#333" /><path d="M18 20q5-2 5-8" fill="none" stroke="#cfe6ff" strokeWidth="1.500" />
        </svg>
        <time className="pl-0.5 whitespace-nowrap">11:17 AM</time>
      </div>
    </div>
  );
}

export default function App() {
  return (
    <div className={"flex h-screen flex-col overflow-hidden bg-white " + UI}>
      <div className="h-[38px] w-[359px] shrink-0 border-2 border-b-0 border-[#00072e] bg-[#0033cc]" />
      <div className="mr-[34px] flex min-h-0 flex-1 flex-col">
        <TitleBar />
        <AddressRow />
        <MenuRow />
        <TabRow />
        <div className="h-[7px] shrink-0 border-b-2 border-[#76757c] bg-[#bccaee]" />
        <div className="flex min-h-0 flex-1 border-l-2 border-[#8c8a86]">
          <div className="flex min-w-0 flex-1 flex-col gap-[26px] overflow-hidden bg-[#f1ece6] bg-[repeating-linear-gradient(180deg,#f3eee9_0px,#f3eee9_5px,#efebe5_7px,#f1ece6_10px,#f4eeea_17px,#eeeae4_19px)] pt-[9px] pr-[87px] pl-[89px]">
            <PageHeader />
            <div className="flex min-h-0 flex-1 gap-[25px] pr-[3px] pl-px">
              <LeftColumn />
              <CenterColumn />
              <RightColumn />
            </div>
          </div>
          <Scrollbar />
        </div>
        <StatusBar />
        <Taskbar />
      </div>
      <div className="h-[130px] w-[359px] shrink-0 border-2 border-t-0 border-[#00072e] bg-[#0033cc]" />
    </div>
  );
}
